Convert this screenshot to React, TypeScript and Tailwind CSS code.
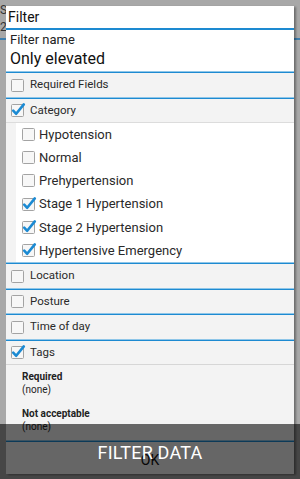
import React from "react";

function Box({ checked }: { checked?: boolean }) {
  return (
    <svg width="15" height="15" viewBox="0 0 15 15" className="shrink-0 overflow-visible">
      <rect x="1.5" y="1.5" width="12" height="12" rx="1" fill="#f7f7f7" stroke="#a3a3a3" strokeWidth="1" />
      {checked && (
        <path d="M3.2 7.6 L6.2 10.8 L13.8 1.4" fill="none" stroke="#1b8ad3" strokeWidth="2.6" strokeLinecap="round" strokeLinejoin="round" />
      )}
    </svg>
  );
}

function Line() {
  return (
    <div>
      <div className="h-[1px] bg-[#8fc6e8]" />
      <div className="h-[1px] bg-[#1d8ad1]" />
    </div>
  );
}

function Row({ label, checked, h = "h-[24px]" }: { label: string; checked?: boolean; h?: string }) {
  return (
    <div className={`flex items-center ${h} bg-[#f3f3f3] pl-[4px] gap-[5px]`}>
      <Box checked={checked} />
      <span className="text-[11.5px] text-[#2a2a2a]">{label}</span>
    </div>
  );
}

function Item({ label, checked }: { label: string; checked?: boolean }) {
  return (
    <div className="flex items-center h-[23.2px] pl-[5px] gap-[3px]">
      <Box checked={checked} />
      <span className="text-[13px] text-[#2a2a2a]">{label}</span>
    </div>
  );
}

export default function App() {
  return (
    <div
      className="relative w-[300px] h-[479px] overflow-hidden bg-[#a8a8a8]"
      style={{ fontFamily: "Roboto, 'Noto Sans', sans-serif" }}
    >
      <div className="absolute left-0 top-[3px] text-[12px] leading-[14px] text-[#333]">S</div>
      <div className="absolute left-0 top-[20px] text-[12px] leading-[14px] text-[#333]">2</div>
      <div className="absolute left-0 right-0 top-[38px] h-[2px] bg-[#3f7fae]" />

      <div className="relative ml-[6px] mt-[6px] w-[288px] h-[468px] bg-white shadow-[2px_1px_2px_rgba(0,0,0,0.35)] flex flex-col">
        <div className="h-[22px] pl-[2px] text-[14px] leading-[22px] text-[#111]">Filter</div>
        <div className="h-[2px] bg-[#1d8ad1]" />
        <div className="h-[41px] pl-[4px] pt-[1px]">
          <div className="text-[13px] leading-[17px] text-[#222]">Filter name</div>
          <div className="text-[16px] leading-[22px] text-[#111]">Only elevated</div>
        </div>
        <Line />
        <Row label="Required Fields" />
        <Line />
        <Row label="Category" checked h="h-[23px]" />
        <div className="h-[1px] bg-[#dcdcdc]" />
        <div className="bg-[#f3f3f3] pl-[10px]">
          <div className="bg-white h-[139px]">
            <Item label="Hypotension" />
            <Item label="Normal" />
            <Item label="Prehypertension" />
            <Item label="Stage 1 Hypertension" checked />
            <Item label="Stage 2 Hypertension" checked />
            <Item label="Hypertensive Emergency" checked />
          </div>
        </div>
        <Line />
        <Row label="Location" />
        <Line />
        <Row label="Posture" h="h-[23px]" />
        <Line />
        <Row label="Time of day" />
        <Line />
        <Row label="Tags" checked h="h-[23px]" />
        <div className="h-[1px] bg-[#d6d6d6]" />
        <div className="h-[75px] bg-[#f3f3f3] pl-[16px] pt-[6px] text-[10px] leading-[12.5px] text-[#222]">
          <div className="font-bold">Required</div>
          <div>(none)</div>
          <div className="font-bold mt-[12px]">Not acceptable</div>
          <div>(none)</div>
        </div>
        <Line />
        <div className="flex-1 bg-[#f3f3f3] flex items-center justify-center pt-[4px] text-[14px] text-[#111]">OK</div>
      </div>

      <div className="absolute left-0 right-0 top-[424px] bottom-0 bg-black/[0.58] flex items-center justify-center pt-[1px]">
        <span className="text-white text-[18px] tracking-[0.2px]">FILTER DATA</span>
      </div>
    </div>
  );
}
